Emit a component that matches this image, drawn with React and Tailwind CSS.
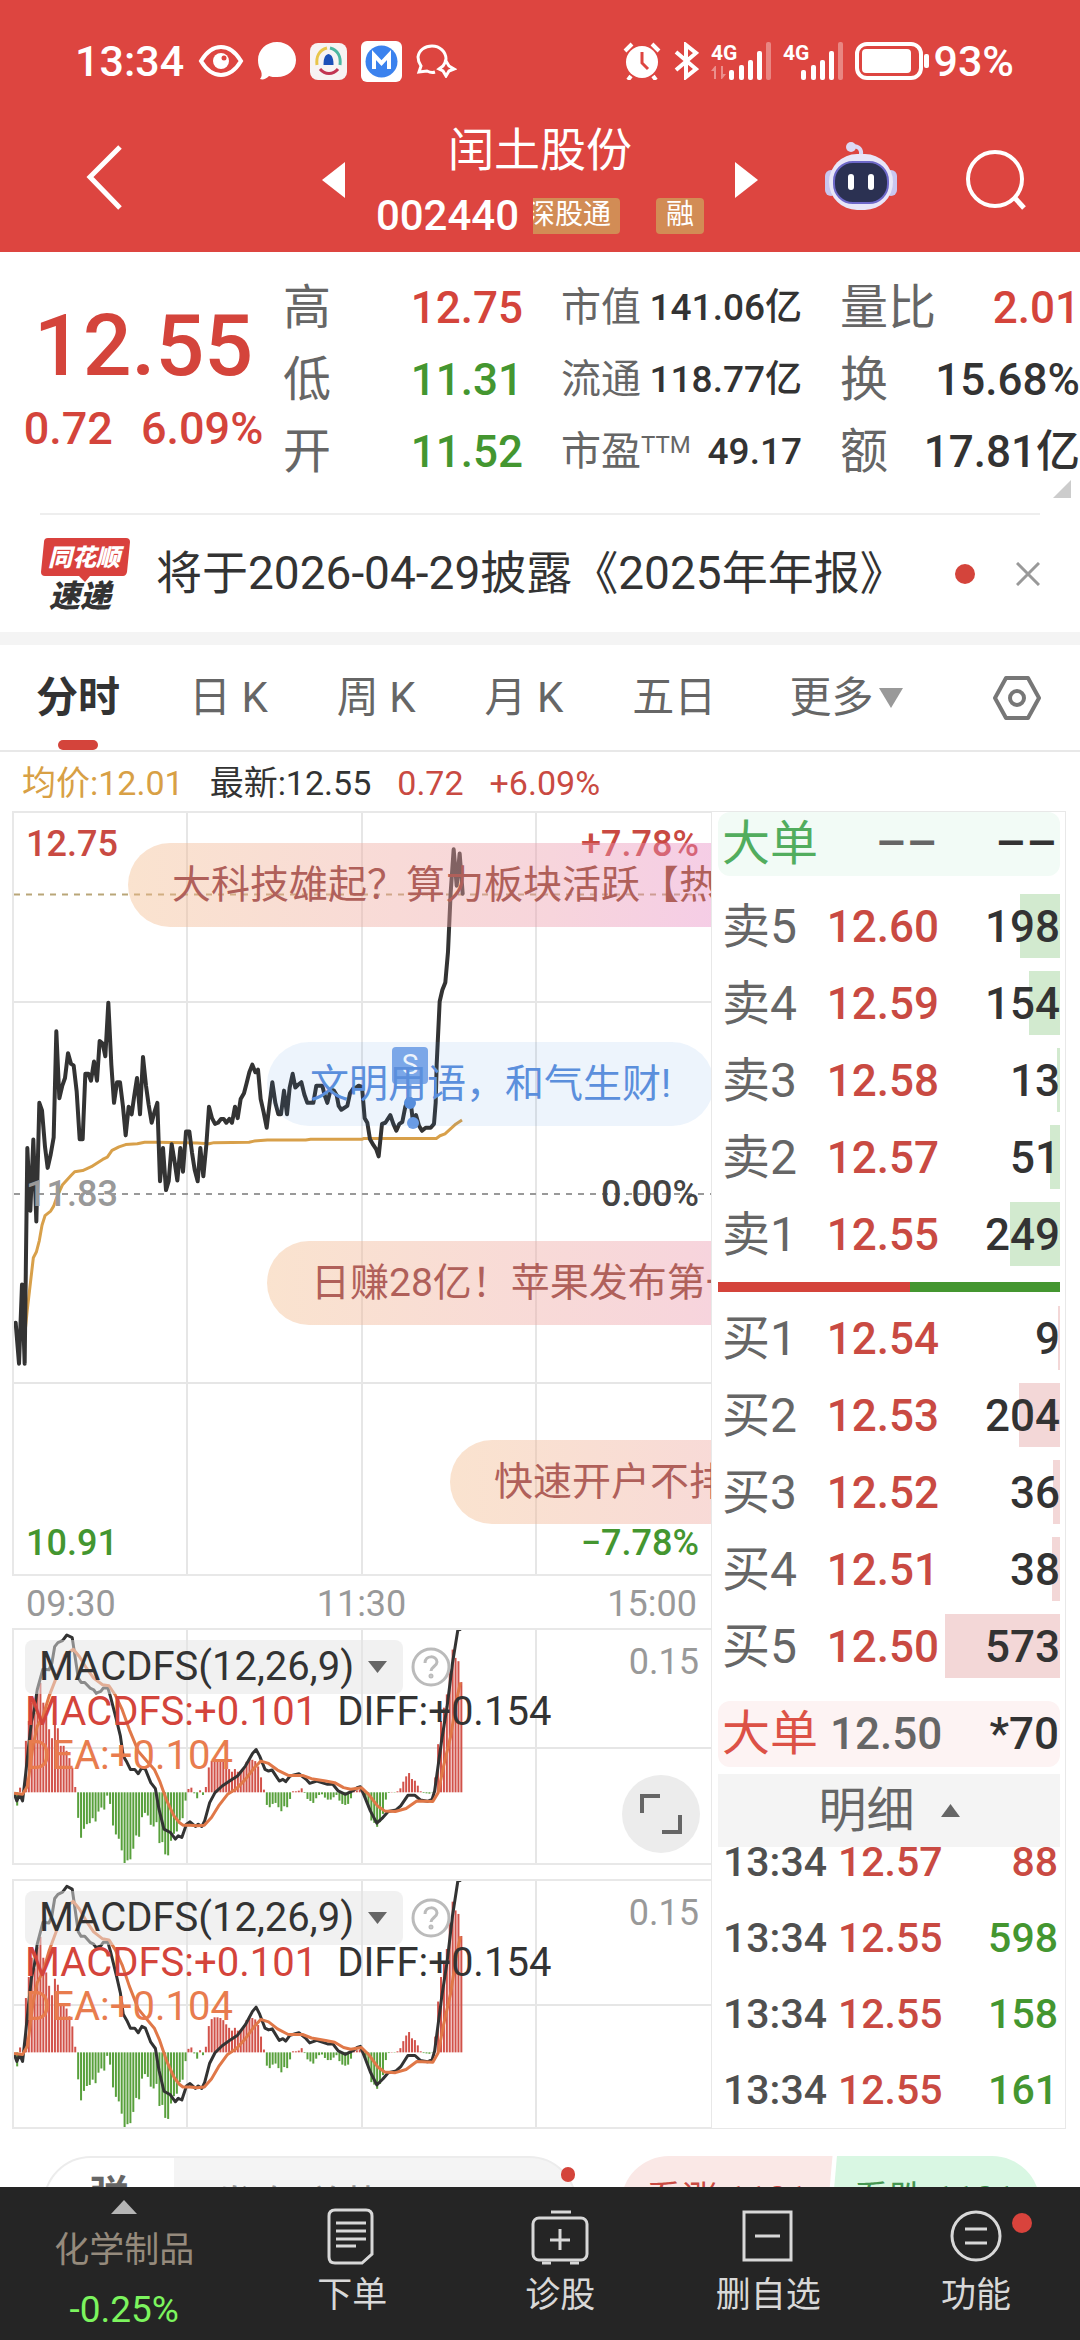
import { useState } from 'react'

const QUOTE_COLUMNS = [
  {
    className: 'w-[240px]',
    labelSize: 'text-[48px]',
    valueSize: 'text-[44px]',
    rows: [
      { label: '高', value: '12.75', color: '#d4443b' },
      { label: '低', value: '11.31', color: '#449630' },
      { label: '开', value: '11.52', color: '#449630' },
    ],
  },
  {
    className: 'w-[241px]',
    labelSize: 'text-[40px]',
    valueSize: 'text-[37px]',
    rows: [
      { label: '市值', value: '141.06亿', color: '#333333' },
      { label: '流通', value: '118.77亿', color: '#333333' },
      { label: '市盈', sup: 'TTM', value: '49.17', color: '#333333' },
    ],
  },
  {
    className: 'flex-1',
    labelSize: 'text-[48px]',
    valueSize: 'text-[44px]',
    rows: [
      { label: '量比', value: '2.01', color: '#d4443b' },
      { label: '换', value: '15.68%', color: '#333333' },
      { label: '额', value: '17.81亿', color: '#333333' },
    ],
  },
]

const TABS = ['分时', '日 K', '周 K', '月 K', '五日']

const SELLS = [
  { label: '卖5', price: '12.60', volume: 198 },
  { label: '卖4', price: '12.59', volume: 154 },
  { label: '卖3', price: '12.58', volume: 13 },
  { label: '卖2', price: '12.57', volume: 51 },
  { label: '卖1', price: '12.55', volume: 249 },
]

const BUYS = [
  { label: '买1', price: '12.54', volume: 9 },
  { label: '买2', price: '12.53', volume: 204 },
  { label: '买3', price: '12.52', volume: 36 },
  { label: '买4', price: '12.51', volume: 38 },
  { label: '买5', price: '12.50', volume: 573 },
]

const MAX_VOLUME = 573

const TICKS = [
  { time: '13:34', price: '12.57', volume: 88, up: true },
  { time: '13:34', price: '12.55', volume: 598, up: false },
  { time: '13:34', price: '12.55', volume: 158, up: false },
  { time: '13:34', price: '12.55', volume: 161, up: false },
]

const PRICE_LINE =
  '45,1365 55,1472 64,1265 72,1472 80,908 89,1072 98,886 107,1100 116,790 124,810 133,905 141,960 150,925 159,880 167,603 176,778 185,745 193,725 202,660 211,688 219,692 228,760 237,885 246,885 254,714 263,714 271,732 280,682 289,732 297,628 306,635 314,668 323,528 332,690 340,790 349,736 358,736 367,800 375,875 384,800 393,820 401,770 409,725 418,820 427,670 436,745 444,795 453,842 461,815 470,790 478,995 487,908 496,1018 504,995 513,898 522,945 530,993 539,908 547,970 556,865 566,865 574,920 582,965 591,995 599,908 608,982 617,900 625,800 634,830 643,845 652,842 661,832 669,832 677,842 686,832 694,842 703,800 711,830 720,780 730,765 738,738 746,710 755,690 764,710 772,703 780,780 789,815 798,855 807,790 815,736 824,790 833,820 841,820 850,758 859,820 867,750 876,714 884,750 893,742 902,736 911,768 920,790 938,790 947,745 965,745 972,770 980,790 990,755 1000,758 1008,770 1014,798 1022,808 1040,798 1048,765 1058,752 1066,750 1074,745 1084,748 1092,830 1100,842 1108,885 1118,900 1127,912 1134,930 1144,845 1154,842 1169,822 1178,845 1187,863 1196,845 1205,840 1214,800 1222,780 1229,780 1237,840 1246,822 1255,850 1264,863 1275,855 1290,855 1300,845 1305,790 1308,690 1317,525 1325,495 1334,475 1342,395 1350,240 1359,127 1368,222 1377,138 1386,243'

const AVG_LINE =
  '72,1400 80,1330 98,1195 107,1180 116,1150 124,1110 133,1085 150,1073 159,1060 167,1040 185,1005 211,980 222,970 246,967 272,957 306,938 320,932 334,914 355,905 375,899 410,897 432,893 470,893 590,895 625,897 640,894 745,893 760,890 800,887 915,887 930,885 1085,885 1090,883 1307,883 1318,876 1333,871 1366,845 1384,835'

const MACD_BARS = [
  0, -40, 14, -20, 155, 215, 270, 240, 300, 330, 270, 228, 190, 163, 210, 193, 140, 140, 125, 103,
  74, 16, -77, -137, -110, -96, -93, -78, -88, -58, -46, -52, -10, -35, -100, -127, -140, -175, -216, -205,
  -202, -170, -130, -134, -75, -62, -70, -98, -103, -90, -153, -150, -187, -190, -146, -125, -118, -85, -78, -25,
  10, 14, -3, -18, 6, -8, 16, 75, 95, 100, 100, 98, 92, 80, 70, 62, 70, 62, 64, 72,
  92, 102, 98, 94, 78, 45, 8, -38, -45, -35, -32, -45, -57, -42, -45, -20, 3, 3, 5, 12,
  -2, -20, -26, -32, -18, -8, -6, -16, -22, -22, -15, -8, -25, -35, -38, -35, -18, 4, 6, 8,
  6, -20, -45, -85, -92, -104, -90, -65, -22, -2, 1, -1, 3, 12, 32, 48, 58, 40, 35, 20,
  3, -2, -3, -4, -1, 45, 145, 215, 255, 295, 370, 430, 405, 395, 332,
]

const DIFF_LINE =
  '42,762 50,785 58,765 66,785 75,700 83,620 91,545 99,510 107,450 123,388 140,390 148,370 156,320 165,308 178,302 190,285 205,293 213,350 222,415 230,428 240,428 255,445 265,450 272,460 285,455 292,445 305,445 312,470 330,545 340,590 348,650 358,668 368,690 380,690 390,703 400,685 410,690 425,730 438,748 448,810 462,870 480,880 494,900 502,890 512,895 525,855 535,848 550,862 558,855 568,862 576,845 590,790 605,760 625,740 650,722 668,710 690,680 710,642 720,630 730,650 745,690 755,695 765,692 785,725 795,720 803,727 815,710 840,703 860,720 870,732 890,725 920,735 935,735 950,755 970,765 980,760 990,755 1003,745 1012,742 1025,775 1040,815 1058,852 1075,835 1090,817 1112,812 1125,800 1145,768 1165,768 1180,782 1200,786 1213,780 1220,755 1240,600 1255,500 1270,370 1285,270 1294,268'

const DEA_LINE =
  '42,762 66,765 80,740 95,620 107,560 123,530 140,470 160,415 185,345 208,328 225,350 245,385 265,415 290,435 308,438 325,465 345,510 365,570 390,635 410,660 435,690 450,725 470,785 490,830 505,850 515,858 535,858 555,860 575,858 595,835 615,800 640,765 665,748 690,720 715,685 733,665 755,672 780,692 810,708 850,708 875,718 915,725 940,730 965,745 985,750 1015,745 1035,765 1060,800 1080,815 1110,817 1140,808 1170,785 1215,787 1230,760 1245,680 1265,590 1280,490 1292,428'

function Signal({ data }) {
  return (
    <svg width="60" height="38" viewBox="0 0 60 38" fill="#fff">
      <text x="0" y="18" fontSize="21" fontWeight="700" fontFamily="Roboto, sans-serif">4G</text>
      {data && <path d="M4 24l-4 5h3v8h2v-13zM11 37l4-5h-3v-8h-2v13z" opacity=".4" />}
      <rect x="18" y="28" width="5" height="10" rx="2" />
      <rect x="28" y="23" width="5" height="15" rx="2" />
      <rect x="37" y="18" width="5" height="20" rx="2" />
      <rect x="46" y="9" width="5" height="29" rx="2" />
      <rect x="55" y="0" width="5" height="38" rx="2" opacity=".35" />
    </svg>
  )
}

function StatusBar() {
  return (
    <div className="h-[122px] flex items-center justify-between pl-[75px] pr-[66px] text-[43px] leading-none font-medium">
      <div className="flex items-center gap-[14px]">
        <span>13:34</span>
        <svg width="46" height="32" viewBox="0 0 46 32" fill="none" stroke="#fff" strokeWidth="4">
          <path d="M3 16C9 6 16 2 23 2s14 4 20 14c-6 10-13 14-20 14S9 26 3 16z" />
          <circle cx="23" cy="16" r="8" fill="#fff" stroke="none" />
          <circle cx="26" cy="13" r="2.5" fill="#dd4540" stroke="none" />
        </svg>
        <svg width="38" height="38" viewBox="0 0 38 38" fill="#fff">
          <path d="M19 0c11 0 19 8 19 18s-8 17-19 17c-3 0-6 0-8-1-3 3-6 4-9 3 2-2 2-5 1-8-2-3-3-7-3-11C0 8 8 0 19 0z" />
        </svg>
        <svg width="37" height="37" viewBox="0 0 37 37">
          <rect width="37" height="37" rx="8" fill="#f7f3f3" />
          <path d="M17 5C9 7 6 14 7 22" fill="none" stroke="#e8c54a" strokeWidth="3" />
          <path d="M20 5c8 2 11 9 10 17" fill="none" stroke="#4db6a0" strokeWidth="3" />
          <path d="M10 26c5 6 13 6 18 0" fill="none" stroke="#c23552" strokeWidth="3" />
          <path d="M18.500 11c-4 1-5 5-5 11h10c0-6-1-10-5-11z" fill="#1c50b8" />
        </svg>
        <svg width="41" height="41" viewBox="0 0 41 41">
          <rect width="41" height="41" rx="6" fill="#fff" />
          <circle cx="20.500" cy="20.500" r="16" fill="#3b82ee" />
          <path d="M13 28V14l7.500 8 7.500-8v14" fill="none" stroke="#fff" strokeWidth="4" />
        </svg>
        <svg width="41" height="34" viewBox="0 0 41 34" fill="none" stroke="#fff" strokeWidth="3">
          <path d="M19 28c-3 1-6 0-8-1l-8 1 2-6C3 19 2 16 2 13 3 6 9 2 16 2c8 0 14 6 14 13l-1 3" />
          <path d="M30 17l3 5 5 3-5 2-3 5-3-5-4-2 4-3z" />
        </svg>
      </div>
      <div className="flex items-center gap-[12px]">
        <svg width="38" height="38" viewBox="0 0 38 38">
          <path d="M2 9l7-7M36 9l-7-7M8 34l-3 4M30 34l3 4" stroke="#fff" strokeWidth="4" />
          <circle cx="19" cy="20" r="16" fill="#fff" />
          <path d="M19 10v11l6 6" fill="none" stroke="#dd4540" strokeWidth="3" />
        </svg>
        <svg width="26" height="38" viewBox="0 0 26 38" fill="none" stroke="#fff" strokeWidth="4">
          <path d="M3 10l20 17-10 8V3l10 8L3 28" />
        </svg>
        <Signal data />
        <Signal />
        <svg width="74" height="38" viewBox="0 0 74 38">
          <rect x="2" y="2" width="64" height="34" rx="10" fill="none" stroke="#fff" strokeWidth="4" />
          <rect x="7" y="7" width="49" height="24" rx="4" fill="#fff" />
          <rect x="69" y="12" width="5" height="14" rx="2" fill="#fff" />
        </svg>
        <span className="-ml-2">93%</span>
      </div>
    </div>
  )
}

function Header() {
  return (
    <header className="bg-[#dd4540] text-white">
      <StatusBar />
      <div className="h-[130px] grid grid-cols-[1fr_auto_1fr] items-start">
        <button aria-label="返回" className="pl-[84px] pt-[22px] justify-self-start">
          <svg width="40" height="68" viewBox="0 0 40 68" fill="none" stroke="#fff" strokeWidth="5">
            <path d="M36 3L6 33l30 31" />
          </svg>
        </button>

        <div className="flex items-start justify-between w-[436px]">
          <button aria-label="上一只" className="pt-[40px]">
            <svg width="23" height="36" viewBox="0 0 23 36" fill="#fff"><path d="M23 0v36L0 18z" /></svg>
          </button>
          <div className="flex flex-col items-center gap-[20px]">
            <h1 className="text-[46px] leading-[56px]">闰土股份</h1>
            <div className="flex items-center h-[36px]">
              <span className="text-[42px] leading-[36px] font-medium">002440</span>
              <span className="ml-[14px] w-[87px] h-[36px] pr-[9px] rounded-r bg-[#d28c55] text-[28px] leading-[34px] flex justify-end overflow-hidden whitespace-nowrap">深股通</span>
              <span className="ml-[36px] px-[10px] h-[36px] rounded bg-[#d28c55] text-[28px] leading-[34px]">融</span>
            </div>
          </div>
          <button aria-label="下一只" className="pt-[40px]">
            <svg width="23" height="36" viewBox="0 0 23 36" fill="#fff"><path d="M0 0v36l23-18z" /></svg>
          </button>
        </div>

        <div className="flex items-start justify-end gap-[69px] pr-[54px] pt-[20px]">
          <button aria-label="智能助手">
            <svg width="72" height="68" viewBox="0 0 72 68">
              <path d="M36 14C37 7 34 4 27 4" fill="none" stroke="#dcd9f5" strokeWidth="4" />
              <circle cx="26" cy="5" r="5" fill="#dcd9f5" />
              <rect x="0" y="28" width="12" height="26" rx="6" fill="#c9c6f0" />
              <rect x="60" y="28" width="12" height="26" rx="6" fill="#c9c6f0" />
              <rect x="4" y="12" width="64" height="56" rx="28" fill="#e8e6f8" />
              <rect x="9" y="20" width="54" height="41" rx="19" fill="#2b3152" stroke="#6d68c8" strokeWidth="2" />
              <rect x="23" y="32" width="6" height="16" rx="3" fill="#fff" />
              <rect x="43" y="32" width="6" height="16" rx="3" fill="#fff" />
            </svg>
          </button>
          <button aria-label="搜索" className="pt-[8px]">
            <svg width="60" height="60" viewBox="0 0 60 60" fill="none" stroke="#fff" strokeWidth="4">
              <circle cx="29" cy="29" r="27" />
              <path d="M48 47l10 11" strokeWidth="5" />
            </svg>
          </button>
        </div>
      </div>
    </header>
  )
}

function Quote() {
  return (
    <section className="relative flex h-[261px]">
      <div className="w-[283px] pt-[44px] pl-1 text-center text-[#d4443b] font-medium">
        <div className="text-[86px] leading-[100px]">12.55</div>
        <div className="mt-2 text-[45px] leading-[50px] flex justify-center gap-[28px]">
          <span>0.72</span>
          <span>6.09%</span>
        </div>
      </div>
      <div className="flex-1 flex gap-[38px] pt-[20px]">
        {QUOTE_COLUMNS.map((col, i) => (
          <dl key={i} className={col.className}>
            {col.rows.map(row => (
              <div key={row.label} className="h-[72px] flex items-center justify-between whitespace-nowrap">
                <dt className={`${col.labelSize} text-[#666]`}>
                  {row.label}
                  {row.sup && <sup className="text-[24px]">{row.sup}</sup>}
                </dt>
                <dd className={`${col.valueSize} font-medium`} style={{ color: row.color }}>{row.value}</dd>
              </div>
            ))}
          </dl>
        ))}
      </div>
      <svg className="absolute right-[9px] bottom-[15px]" width="18" height="18" viewBox="0 0 18 18" fill="#cccccc">
        <path d="M18 0v18H0z" />
      </svg>
    </section>
  )
}

function News() {
  return (
    <section className="mx-[40px] h-[119px] border-t-2 border-[#eeeeee] flex items-center">
      <svg width="92" height="76" viewBox="0 0 92 76" fontFamily="'Noto Sans CJK SC', sans-serif" fontStyle="italic" fontWeight="900">
        <path d="M8 2h78q4 0 4 4l-3 30q-1 4-4 4H50l-5 6-6-6H5q-4 0-4-4L4 6q0-4 4-4z" fill="#d9413d" />
        <text x="8" y="30" fontSize="24" fill="#fff">同花顺</text>
        <text x="9" y="71" fontSize="31" fill="#333">速递</text>
      </svg>
      <a href="#news" className="flex-1 ml-[24px] text-[46px] text-[#333] whitespace-nowrap">将于2026-04-29披露《2025年年报》</a>
      <span className="w-[20px] h-[20px] rounded-full bg-[#d4443b]" />
      <button aria-label="关闭" className="ml-[41px]">
        <svg width="24" height="24" viewBox="0 0 24 24" stroke="#999" strokeWidth="3"><path d="M1 1l22 22M23 1L1 23" /></svg>
      </button>
    </section>
  )
}

function Tabs() {
  const [active, setActive] = useState('分时')

  return (
    <nav className="h-[107px] pl-[36px] pr-[38px] flex items-center gap-[69px] text-[42px] text-[#666] border-b-2 border-[#e8e8e8]">
      {TABS.map(tab => (
        <button
          key={tab}
          onClick={() => setActive(tab)}
          className={`relative h-full whitespace-nowrap ${tab === active ? 'font-bold text-[#333]' : ''}`}
        >
          {tab}
          {tab === active && <span className="absolute bottom-0 left-1/2 -ml-5 w-10 h-[10px] rounded-full bg-[#d4443b]" />}
        </button>
      ))}
      <button className="pl-1 flex items-center gap-[6px] whitespace-nowrap">
        更多
        <svg width="24" height="20" viewBox="0 0 24 20" fill="#999"><path d="M0 0h24L12 20z" /></svg>
      </button>
      <button aria-label="设置" className="ml-auto">
        <svg width="50" height="46" viewBox="0 0 50 46" fill="none" stroke="#777" strokeWidth="4" strokeLinejoin="round">
          <path d="M14 3h22l11 20-11 20H14L3 23z" />
          <circle cx="25" cy="23" r="7" />
        </svg>
      </button>
    </nav>
  )
}

function Grid() {
  return (
    <div className="absolute inset-0 grid grid-cols-4">
      <div className="border-r-2 border-[#e6e6e6]" />
      <div className="border-r-2 border-[#e6e6e6]" />
      <div className="border-r-2 border-[#e6e6e6]" />
    </div>
  )
}

const PILL = 'self-start h-[84px] rounded-full flex items-center whitespace-nowrap text-[39px] shrink-0'
const WARM =
  'w-[760px] pl-[44px] text-[#b0605a] bg-[linear-gradient(90deg,rgba(243,188,140,0.42)_0px,rgba(236,155,171,0.42)_420px,rgba(231,133,200,0.42)_620px)]'

function PriceChart() {
  return (
    <div className="relative h-[765px] border-2 border-r-0 border-[#e8e8e8] overflow-hidden">
      <Grid />
      <div className="absolute inset-0 grid grid-rows-4">
        <div className="border-b-2 border-[#e6e6e6]" />
        <div />
        <div className="border-b-2 border-[#e6e6e6]" />
      </div>
      <svg className="absolute inset-0 w-full h-full" viewBox="40 32 2091 1990" preserveAspectRatio="none" fill="none">
        <path d="M40 245H2131" stroke="#b9a678" strokeWidth="2" strokeDasharray="6 6" vectorEffect="non-scaling-stroke" />
        <path d="M40 1028H2131" stroke="#999" strokeWidth="2" strokeDasharray="6 6" vectorEffect="non-scaling-stroke" />
        <polyline points={AVG_LINE} stroke="#d8a04a" strokeWidth="3" strokeLinejoin="round" vectorEffect="non-scaling-stroke" />
        <polyline points={PRICE_LINE} stroke="#333" strokeWidth="4" strokeLinejoin="round" strokeLinecap="round" vectorEffect="non-scaling-stroke" />
      </svg>

      {/* axis labels */}
      <div className="absolute inset-0 px-3 py-[11px] flex justify-between text-[36px] leading-[40px] font-medium">
        <div className="flex flex-col justify-between">
          <span className="text-[#c94a42]">12.75</span>
          <span className="text-[#999]">11.83</span>
          <span className="text-[#449630]">10.91</span>
        </div>
        <div className="flex flex-col justify-between items-end">
          <span className="text-[#c94a42]">+7.78%</span>
          <span className="text-[#444]">0.00%</span>
          <span className="text-[#449630]">−7.78%</span>
        </div>
      </div>

      {/* trade marker */}
      <svg className="absolute left-[378px] top-[234px]" width="36" height="86" viewBox="0 0 36 86">
        <rect width="36" height="37" rx="4" fill="#82abea" />
        <path d="M18 37v18" stroke="#82abea" strokeWidth="3" />
        <circle cx="18" cy="56" r="6" fill="#5b8fdc" />
        <circle cx="21" cy="76" r="6" fill="#6f9fe6" />
        <text x="18" y="27" fontSize="28" textAnchor="middle" fill="#fff" fontFamily="Roboto, sans-serif">S</text>
      </svg>

      {/* scrolling comments */}
      <div className="absolute inset-0 pt-[30px] flex flex-col gap-[115px] overflow-hidden">
        <div className={`${PILL} ${WARM} ml-[114px]`}>大科技雄起？算力板块活跃【热点】</div>
        <div className={`${PILL} ml-[253px] px-[43px] text-[#5b8fdc] bg-[rgba(55,133,222,0.09)]`}>文明用语，和气生财!</div>
        <div className={`${PILL} ${WARM} ml-[253px]`}>日赚28亿！苹果发布第一</div>
        <div className={`${PILL} ${WARM} ml-[436px]`}>快速开户不排队</div>
      </div>
    </div>
  )
}

function MacdChart({ className, expandable }) {
  return (
    <div className={`relative border-2 border-r-0 border-[#e8e8e8] ${className}`}>
      <Grid />
      <div className="absolute inset-x-0 top-1/2 h-[2px] bg-[#e6e6e6]" />
      <svg className="absolute inset-0 w-full h-full" viewBox="42 270 1952 702" preserveAspectRatio="none" fill="none">
        {MACD_BARS.map((v, i) => (
          <rect
            key={i}
            x={40 + 8.13 * i}
            y={v > 0 ? 759 - v : 759}
            width="5.6"
            height={Math.abs(v)}
            fill={v > 0 ? '#d2524a' : '#58a03c'}
          />
        ))}
        <polyline points={DIFF_LINE} stroke="#333" strokeWidth="3" strokeLinejoin="round" vectorEffect="non-scaling-stroke" />
        <polyline points={DEA_LINE} stroke="#e07848" strokeWidth="3" strokeLinejoin="round" vectorEffect="non-scaling-stroke" />
      </svg>

      <div className="absolute inset-0 pl-[11px] pt-[10px] text-[40px] leading-[44px] whitespace-nowrap">
        <div className="flex items-center gap-2">
          <button className="h-[54px] pl-[14px] pr-4 rounded-lg flex items-center gap-[14px] bg-[rgba(228,228,228,0.5)] text-[#333]">
            MACDFS(12,26,9)
            <svg width="19" height="12" viewBox="0 0 19 12" fill="#666"><path d="M0 0h19L9.500 12z" /></svg>
          </button>
          <button aria-label="说明">
            <svg width="40" height="40" viewBox="0 0 40 40" fill="none" stroke="#bbb" strokeWidth="3">
              <circle cx="20" cy="20" r="18" />
              <path d="M14 16c0-8 12-8 12-1 0 4-6 5-6 9" />
              <circle cx="20" cy="29" r="1" />
            </svg>
          </button>
        </div>
        <div className="-mt-1 flex gap-[20px]">
          <span className="text-[#d4443b]">MACDFS:+0.101</span>
          <span className="text-[#333]">DIFF:+0.154</span>
        </div>
        <div className="text-[#e87c4e]">DEA:+0.104</div>
      </div>
      <span className="absolute right-3 top-[10px] text-[36px] leading-[44px] text-[#999]">0.15</span>
      {expandable && (
        <button aria-label="全屏" className="absolute right-[11px] bottom-[10px] w-[78px] h-[78px] rounded-full bg-[#ececec] flex items-center justify-center">
          <svg width="42" height="42" viewBox="0 0 42 42" fill="none" stroke="#666" strokeWidth="4">
            <path d="M2 20V3h18M40 22v17H22" />
          </svg>
        </button>
      )}
    </div>
  )
}

function LevelTable({ levels, barClass }) {
  return (
    <table className="w-full table-fixed text-[44px] leading-[50px] font-medium">
      <tbody>
        {levels.map(level => (
          <tr key={level.label} className="h-[77px]">
            <th scope="row" className="w-[104px] p-0 pl-1 text-left text-[48px] font-normal text-[#666]">{level.label}</th>
            <td className="p-0 pr-[6px] text-right text-[#c94a42]">{level.price}</td>
            <td className="relative w-[115px] p-0 text-right text-[#333]">
              <span
                className={`absolute right-0 top-[6px] bottom-[7px] ${barClass}`}
                style={{ width: `${(level.volume / MAX_VOLUME) * 100}%` }}
              />
              <span className="relative">{level.volume}</span>
            </td>
          </tr>
        ))}
      </tbody>
    </table>
  )
}

function OrderBook() {
  return (
    <aside className="w-[355px] shrink-0 border border-[#e8e8e8] pl-[6px] pr-[5px] flex flex-col">
      <div className="h-[64px] mb-3 pl-1 pr-[3px] rounded-xl bg-[#f2fbf6] flex items-center text-[48px] font-medium whitespace-nowrap">
        <span className="font-normal text-[#52ad5e]">大单</span>
        <span className="flex-1 text-right pr-[58px] text-[#666]">––</span>
        <span className="text-[#333]">––</span>
      </div>
      <LevelTable levels={SELLS} barClass="bg-[#d2eacf]" />
      <div className="mt-[9px] mb-2 h-[10px] flex">
        <div className="w-[56%] bg-[#d4443b]" />
        <div className="flex-1 bg-[#449630]" />
      </div>
      <LevelTable levels={BUYS} barClass="bg-[#f3d7d7]" />
      <div className="h-[66px] mt-4 mb-[7px] pl-1 pr-[1px] rounded-xl bg-[#fdf3f3] flex items-center text-[44px] font-medium whitespace-nowrap">
        <span className="w-[101px] text-[48px] font-normal text-[#dc5146]">大单</span>
        <span className="flex-1 pl-[7px] text-[#666]">12.50</span>
        <span className="text-[#333]">*70</span>
      </div>
      <button className="h-[73px] bg-[#f4f4f4] text-[48px] text-[#666] flex items-center justify-center gap-[26px] leading-none">
        明细
        <svg width="19" height="13" viewBox="0 0 19 13" fill="#666"><path d="M9.500 0L19 13H0z" /></svg>
      </button>
      <div className="h-[281px] overflow-hidden flex flex-col justify-end">
        <table className="w-full table-fixed text-[41px] leading-[44px] font-medium">
          <tbody>
            {TICKS.map((tick, i) => (
              <tr key={i} className="h-[76px]">
                <td className="w-[117px] p-0 pl-[5px] text-[#505050]">{tick.time}</td>
                <td className="p-0 pl-[3px] text-[#c94a42]">{tick.price}</td>
                <td className={`p-0 pr-[2px] w-[110px] text-right ${tick.up ? 'text-[#c94a42]' : 'text-[#449630]'}`}>{tick.volume}</td>
              </tr>
            ))}
          </tbody>
        </table>
      </div>
    </aside>
  )
}

function CommentBar() {
  return (
    <div className="mt-[27px] pl-[43px] pr-[40px] flex gap-[44px] text-[36px] leading-[40px] whitespace-nowrap">
      <div className="relative w-[534px] h-[96px] flex rounded-full border-2 border-[#ececec] bg-[#f4f4f4]">
        <button className="w-[129px] pt-[18px] h-full rounded-l-full bg-white text-[40px] font-bold text-[#666] flex justify-center">弹</button>
        <input aria-label="发布弹幕" placeholder="发布弹幕" className="w-[300px] pl-[40px] pt-[4px] text-[42px] outline-none placeholder:text-[#999]" />
        <span className="absolute right-0 top-[9px] w-[14px] h-[15px] rounded-full bg-[#d4443b]" />
      </div>
      <div className="flex-1 h-[96px] rounded-full overflow-hidden flex">
        <button className="flex-1 pt-[24px] flex justify-center bg-[#fae8e6] text-[#c94a42] [clip-path:polygon(0_0,100%_0,96%_100%,0_100%)]">看涨 1101</button>
        <button className="flex-1 -ml-1 pt-[24px] flex justify-center bg-[#d9f7e3] text-[#449650] [clip-path:polygon(4%_0,100%_0,100%_100%,0_100%)]">看跌 1101</button>
      </div>
    </div>
  )
}

const ACTIONS = [
  {
    label: '下单',
    icon: (
      <>
        <path d="M9 2h31q6 0 6 6v38l-10 9H9q-6 0-6-6V8q0-6 6-6z" />
        <path d="M10 15h30M10 23h30M10 31h30M10 38h20" />
      </>
    ),
  },
  {
    label: '诊股',
    icon: (
      <>
        <path d="M17 4h20" />
        <rect x="-1" y="10" width="54" height="42" rx="6" />
        <path d="M26 21v21M16 32h20M8 55h9M36 55h9" />
      </>
    ),
  },
  {
    label: '删自选',
    icon: (
      <>
        <rect x="2" y="4" width="47" height="48" />
        <path d="M13 28h25" />
      </>
    ),
  },
  {
    label: '功能',
    badge: true,
    icon: (
      <>
        <circle cx="26" cy="28" r="24" />
        <path d="M15 21h22M15 35h22" />
      </>
    ),
  },
]

function BottomBar() {
  return (
    <footer className="relative z-10 h-[153px] shrink-0 flex bg-[#252525] text-[35px] text-[#d8d8d8]">
      <button className="w-[23%] pt-[13px] flex flex-col items-center">
        <svg width="26" height="14" viewBox="0 0 26 14" fill="#b5b5b5"><path d="M13 0l13 14H0z" /></svg>
        <span className="mt-[15px] leading-[44px] text-[#958a7c]">化学制品</span>
        <span className="mt-[15px] leading-[44px] text-[37px] text-[#7cf45e]">-0.25%</span>
      </button>
      {ACTIONS.map(({ label, icon, badge }) => (
        <button key={label} className="relative flex-1 pt-[21px] flex flex-col items-center">
          <svg width="52" height="58" viewBox="0 0 52 58" className="overflow-visible" fill="none" stroke="#d8d8d8" strokeWidth="3">{icon}</svg>
          <span className="mt-2 leading-[44px]">{label}</span>
          {badge && <span className="absolute left-1/2 ml-9 top-[26px] w-5 h-5 rounded-full bg-[#d9433c]" />}
        </button>
      ))}
    </footer>
  )
}

export default function App() {
  return (
    <div className="h-screen flex flex-col bg-white font-['Roboto','Noto_Sans_CJK_SC',sans-serif] text-[#333] overflow-hidden">
      <Header />
      <main className="flex-1 min-h-0 overflow-hidden">
        <Quote />
        <News />
        <div className="h-[13px] bg-[#f4f4f4]" />
        <Tabs />
        <div className="h-[59px] pt-1 pl-[22px] flex items-center gap-[26px] text-[34px]">
          <span className="text-[#d8a045]">均价:12.01</span>
          <span>最新:12.55</span>
          <span className="text-[#c94a42]">0.72</span>
          <span className="text-[#c94a42]">+6.09%</span>
        </div>
        <div className="pl-3 pr-[14px] flex">
          <div className="flex-1 min-w-0 flex flex-col">
            <PriceChart />
            <div className="h-[52px] px-[14px] pt-1 flex items-center justify-between text-[36px] text-[#999]">
              <span>09:30</span>
              <span>11:30</span>
              <span>15:00</span>
            </div>
            <MacdChart className="h-[237px]" expandable />
            <MacdChart className="h-[250px] mt-[14px]" />
          </div>
          <OrderBook />
        </div>
        <CommentBar />
      </main>
      <BottomBar />
    </div>
  )
}
